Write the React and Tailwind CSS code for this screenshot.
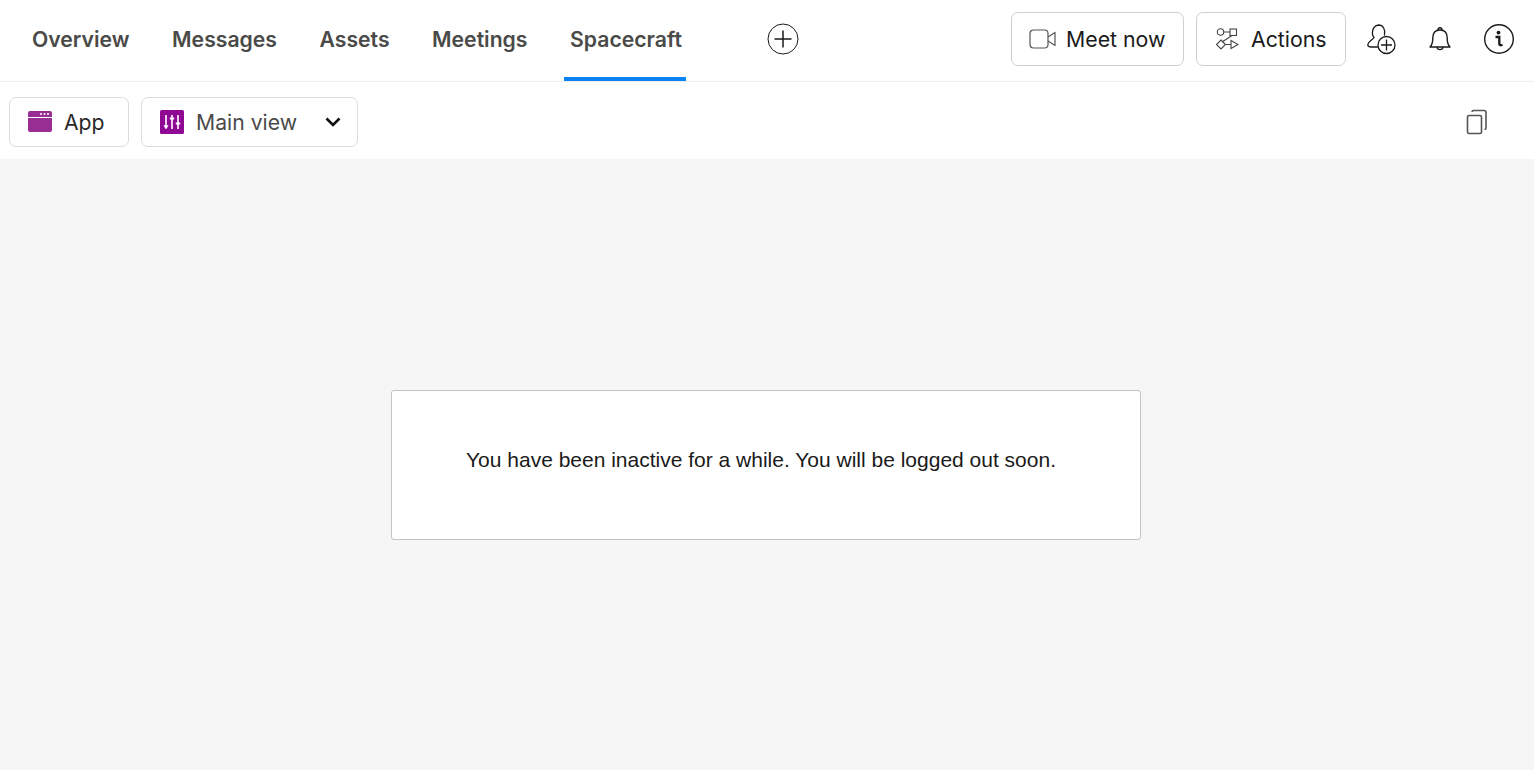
import React from "react";

const inter = "font-['Inter',sans-serif]";

function Tab({ label, active }) {
  return (
    <div className={`relative flex h-full items-center px-1.5 pb-[2px] text-[21.2px] font-semibold text-[#4a4a48] ${inter}`}>
      {label}
      {active && <div className="absolute bottom-0 left-0 right-[2px] h-1 bg-[#0a84f5]" />}
    </div>
  );
}

const Video = () => (
  <svg width="28" height="20" viewBox="0 0 28 20" fill="none" stroke="#555" strokeWidth="1.2" strokeLinejoin="round">
    <rect x="1" y="1" width="18" height="18" rx="3.5" />
    <path d="M19 8 L26 3.5 V16.5 L19 12" />
  </svg>
);

const ActionsIcon = () => (
  <svg width="24" height="24" viewBox="0 0 24 24" fill="none" stroke="#444" strokeWidth="1.1">
    <circle cx="5.5" cy="5" r="3.2" />
    <rect x="15" y="2" width="6.5" height="6.5" />
    <path d="M8.7 5 H15 M17 8.5 L7 15" />
    <path d="M6 13 L10.5 17.5 L6 22 L1.5 17.5 Z" />
    <path d="M10.5 17.5 H16 M16 13.5 L23 17.5 L16 21.5 Z" />
  </svg>
);

const AddUser = () => (
  <svg width="30" height="32" viewBox="0 0 30 32" fill="none" stroke="#1a1a1a" strokeWidth="1.3">
    <path d="M11.5 24 H5 C2 24 1 22.5 2.5 20 C4 17.5 7 16.5 8 14.5 C5.5 12 5.5 3 12.5 2 C17 2 19.5 6 18.5 12" strokeLinecap="round" />
    <circle cx="20.5" cy="22" r="8.5" />
    <path d="M20.5 16.5 V27.5 M15 22 H26" />
  </svg>
);

const Bell = () => (
  <svg width="24" height="28" viewBox="0 0 24 28" fill="none" stroke="#1a1a1a" strokeWidth="1.4" strokeLinejoin="round">
    <path d="M2 22 C4.5 19.5 4.8 17 4.8 13 C4.8 8 7.5 5 12 5 C16.5 5 19.2 8 19.2 13 C19.2 17 19.5 19.5 22 22 Z" />
    <path d="M10 5 C10 2 14 2 14 5" />
    <path d="M9 22 C9.5 25.5 14.5 25.5 15 22" />
  </svg>
);

const Info = () => (
  <svg width="32" height="32" viewBox="0 0 32 32" fill="none">
    <circle cx="16" cy="16" r="14.3" stroke="#1a1a1a" strokeWidth="1.4" />
    <circle cx="15.5" cy="9.6" r="1.9" fill="#1a1a1a" />
    <path d="M12.5 14 H16.3 V21 C16.3 22.4 17.5 22.6 19.5 21.8" stroke="#1a1a1a" strokeWidth="2.3" />
  </svg>
);

const AppIcon = () => (
  <svg width="24" height="22" viewBox="0 0 24 22">
    <rect x="0" y="0" width="24" height="21" rx="2" fill="#982d93" />
    <rect x="0" y="6" width="24" height="1" fill="#fff" />
    <circle cx="13" cy="3" r="1" fill="#fff" />
    <circle cx="16.5" cy="3" r="1" fill="#fff" />
    <circle cx="20" cy="3" r="1" fill="#fff" />
  </svg>
);

const ViewIcon = () => (
  <svg width="24" height="24" viewBox="0 0 24 24">
    <rect width="24" height="24" rx="1.5" fill="#8f0894" />
    <g stroke="#fff" strokeWidth="1.6" fill="#fff">
      <path d="M6 5 V18" />
      <path d="M3.8 15.5 L6 19 L8.2 15.5 Z" strokeWidth="0.5" />
      <path d="M12 5 V19" />
      <path d="M9.8 8.5 H14.2" strokeWidth="2" />
      <path d="M18 5 V19" />
      <path d="M15.8 13.5 H20.2" strokeWidth="2" />
    </g>
  </svg>
);

const Copy = () => (
  <svg width="24" height="26" viewBox="0 0 24 26" fill="none" stroke="#555" strokeWidth="1.6">
    <rect x="2.5" y="6.5" width="14" height="18" rx="1.5" />
    <path d="M7 3 C7 2 7.5 1.5 8.5 1.5 H19 C20.5 1.5 21 2 21 3.5 V19 C21 20 20.5 20.5 19.5 20.5" />
  </svg>
);

export default function App() {
  return (
    <div className={`flex h-[770px] w-[1534px] flex-col bg-[#f6f6f6] ${inter}`}>
      <header className="flex h-[82px] items-center justify-between border-b border-[#eeeeee] bg-white pl-[26px] pr-[19px]">
        <nav className="flex h-full items-center gap-[30.5px]">
          <Tab label="Overview" />
          <Tab label="Messages" />
          <Tab label="Assets" />
          <Tab label="Meetings" />
          <Tab label="Spacecraft" active />
          <svg className="mb-[3px] ml-[49px]" width="32" height="32" viewBox="0 0 32 32" fill="none" stroke="#1a1a1a" strokeWidth="1">
            <circle cx="16" cy="16" r="15" />
            <path d="M16 7.5 V24.5 M7.5 16 H24.5" strokeWidth="1.5" />
          </svg>
        </nav>
        <div className="mb-[3px] flex items-center">
          <button className="flex h-[54px] w-[173px] items-center gap-[9px] rounded-[7px] border border-[#cfcfcf] pl-[17px] text-[21.3px] text-[#1a1a1a]">
            <Video />
            <span className="mt-[1px]">Meet now</span>
          </button>
          <button className="ml-3 flex h-[54px] w-[150px] items-center gap-[12px] rounded-[7px] border border-[#cfcfcf] pl-[18px] text-[21.3px] text-[#1a1a1a]">
            <ActionsIcon />
            <span className="mt-[1px]">Actions</span>
          </button>
          <div className="ml-[20px] flex items-center">
            <AddUser />
            <div className="ml-[32px]"><Bell /></div>
            <div className="ml-[31px]"><Info /></div>
          </div>
        </div>
      </header>
      <div className="flex h-[77px] items-center justify-between bg-white pl-[9px] pr-[45px] pt-[2px]">
        <div className="flex items-center gap-3">
          <button className="flex h-[50px] w-[120px] items-center gap-3 rounded-[7px] border border-[#dddddd] pl-[18px] text-[21.2px] text-[#2a2a2a]">
            <AppIcon />
            <span className="mt-[2px]">App</span>
          </button>
          <button className="flex h-[50px] w-[217px] items-center rounded-[7px] border border-[#dddddd] pl-[18px] text-[21.2px] text-[#4a4a4a]">
            <ViewIcon />
            <span className="ml-3 mt-[2px]">Main view</span>
            <svg className="ml-[27px]" width="18" height="18" viewBox="0 0 18 18" fill="none" stroke="#111" strokeWidth="2.6">
              <path d="M2.5 5.5 L9 12 L15.5 5.5" />
            </svg>
          </button>
        </div>
        <Copy />
      </div>
      <main className="flex flex-1 justify-center pr-[2px]">
        <div className="mt-[231px] flex h-[150px] w-[750px] items-center justify-center rounded-[3px] border border-[#c4c4c4] bg-white pb-[11px] pr-[10px] font-['Liberation_Sans',sans-serif] text-[21px] text-[#1a1a1a]">
          You have been inactive for a while. You will be logged out soon.
        </div>
      </main>
    </div>
  );
}
